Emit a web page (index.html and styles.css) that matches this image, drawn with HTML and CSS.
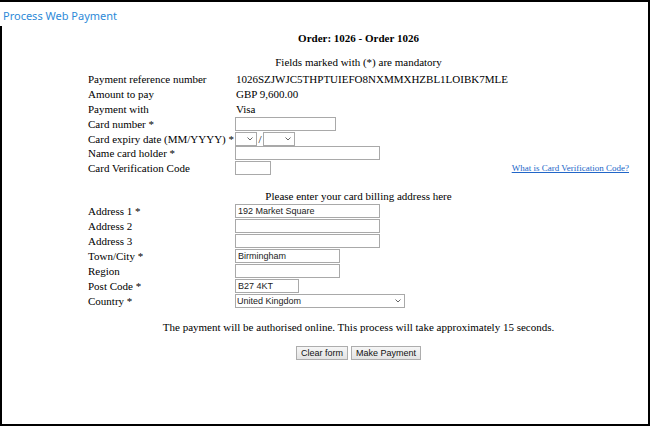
FILE: index.html
```html
<!DOCTYPE html>
<html>
<head>
<meta charset="utf-8">
<link rel="stylesheet" href="styles.css">
</head>
<body>
<div class="frame">
  <div class="title">Process Web Payment</div>
  <div class="panel">
    <div class="content">
      <div class="order">Order: 1026 - Order 1026</div>
      <div class="note">Fields marked with (*) are mandatory</div>
      <div class="grid card">
        <div class="lbl">Payment reference number</div><div class="val">1026SZJWJC5THPTUIEFO8NXMMXHZBL1LOIBK7MLE</div><div></div>
        <div class="lbl">Amount to pay</div><div class="val">GBP 9,600.00</div><div></div>
        <div class="lbl">Payment with</div><div class="val">Visa</div><div></div>
        <div class="lbl">Card number *</div><div class="fld"><input class="in w101" type="text"></div><div></div>
        <div class="lbl">Card expiry date (MM/YYYY) *</div><div class="fld"><span class="selwrap"><select class="sel w22"><option></option></select><svg class="chev" viewBox="0 0 6 4" width="6" height="4"><path d="M0.5 0.5 L3 3 L5.5 0.5" fill="none" stroke="#555" stroke-width="0.9"/></svg></span><span class="slash">/</span><span class="selwrap"><select class="sel w32"><option></option></select><svg class="chev" viewBox="0 0 6 4" width="6" height="4"><path d="M0.5 0.5 L3 3 L5.5 0.5" fill="none" stroke="#555" stroke-width="0.9"/></svg></span></div><div></div>
        <div class="lbl">Name card holder *</div><div class="fld"><input class="in w145" type="text"></div><div></div>
        <div class="lbl">Card Verification Code</div><div class="fld"><input class="in w36" type="text"></div><div class="link"><a href="#">What is Card Verification Code?</a></div>
      </div>
      <div class="note note2">Please enter your card billing address here</div>
      <div class="grid addr">
        <div class="lbl">Address 1 *</div><div class="fld"><input class="in w145" type="text" value="192 Market Square"></div><div></div>
        <div class="lbl">Address 2</div><div class="fld"><input class="in w145" type="text"></div><div></div>
        <div class="lbl">Address 3</div><div class="fld"><input class="in w145" type="text"></div><div></div>
        <div class="lbl">Town/City *</div><div class="fld"><input class="in w105" type="text" value="Birmingham"></div><div></div>
        <div class="lbl">Region</div><div class="fld"><input class="in w105" type="text"></div><div></div>
        <div class="lbl">Post Code *</div><div class="fld"><input class="in w64" type="text" value="B27 4KT"></div><div></div>
        <div class="lbl">Country *</div><div class="fld"><span class="selwrap"><select class="sel w170"><option>United Kingdom</option></select><svg class="chev" viewBox="0 0 6 4" width="6" height="4"><path d="M0.5 0.5 L3 3 L5.5 0.5" fill="none" stroke="#555" stroke-width="0.9"/></svg></span></div><div></div>
      </div>
      <div class="msg">The payment will be authorised online. This process will take approximately 15 seconds.</div>
      <div class="buttons">
        <button class="btn" type="button">Clear form</button>
        <button class="btn" type="button">Make Payment</button>
      </div>
    </div>
  </div>
</div>
</body>
</html>
```
FILE: styles.css
```css
html, body {
  margin: 0;
  padding: 0;
  background: #fff;
}
body {
  font-family: "Liberation Serif", "Times New Roman", serif;
  font-size: 11px;
  color: #000;
}
.frame {
  width: 648px;
  height: 422px;
  border-top: 2px solid #000;
  border-right: 2px solid #000;
  border-bottom: 2px solid #000;
  overflow: hidden;
  display: flex;
  flex-direction: column;
}
.title {
  height: 20px;
  padding-top: 4px;
  flex: none;
  padding-left: 3px;
  font-family: "Noto Sans", "Open Sans", sans-serif;
  font-size: 11px;
  line-height: 20px;
  color: #2d8ad8;
}
.panel {
  flex: 1;
  border-left: 2px solid #000;
}
.content {
  width: 713px;
  padding-top: 5px;
}
.order {
  text-align: center;
  font-weight: bold;
  line-height: 14px;
  height: 14px;
}
.note {
  text-align: center;
  line-height: 14px;
  height: 14px;
  margin-top: 10px;
  margin-bottom: 3px;
}
.note2 {
  margin-top: 13px;
  margin-bottom: 1px;
}
.grid {
  width: 541px;
  margin: 0 auto;
  display: grid;
  grid-template-columns: 147px 1fr auto;
}
.card { grid-auto-rows: 14.8px; }
.addr { grid-auto-rows: 15px; }
.lbl, .val, .fld, .link {
  display: flex;
  align-items: center;
  white-space: nowrap;
}
.val { padding-left: 1px; }
.link a {
  font-size: 9px;
  color: #2166c8;
  text-decoration: underline;
}
.in, .sel {
  box-sizing: border-box;
  height: 14px;
  border: 1px solid #a9a9a9;
  border-radius: 0;
  padding: 0 2px;
  margin: 0;
  font-family: "Liberation Sans", Arial, sans-serif;
  font-size: 9px;
  color: #222;
  background: #fff;
}
.sel {
  padding: 0 1px;
  -webkit-appearance: none;
  appearance: none;
  display: block;
}
.selwrap {
  position: relative;
  display: block;
}
.chev {
  position: absolute;
  right: 4px;
  top: 5px;
  pointer-events: none;
}
.w22 { width: 22px; }
.w32 { width: 32px; }
.w36 { width: 36px; }
.w64 { width: 64px; }
.w101 { width: 101px; }
.w105 { width: 105px; }
.w145 { width: 145px; }
.w170 { width: 170px; }
.slash {
  width: 6px;
  text-align: center;
}
.msg {
  text-align: center;
  line-height: 14px;
  margin-top: 11px;
}
.buttons {
  display: flex;
  justify-content: center;
  gap: 3px;
  margin-top: 12px;
}
.btn {
  box-sizing: border-box;
  height: 14px;
  padding: 0 4px;
  margin: 0;
  border: 1px solid #adadad;
  border-radius: 0;
  background: linear-gradient(#f6f6f6, #e3e3e3);
  font-family: "Liberation Sans", Arial, sans-serif;
  font-size: 9px;
  color: #111;
  line-height: 12px;
}
```
